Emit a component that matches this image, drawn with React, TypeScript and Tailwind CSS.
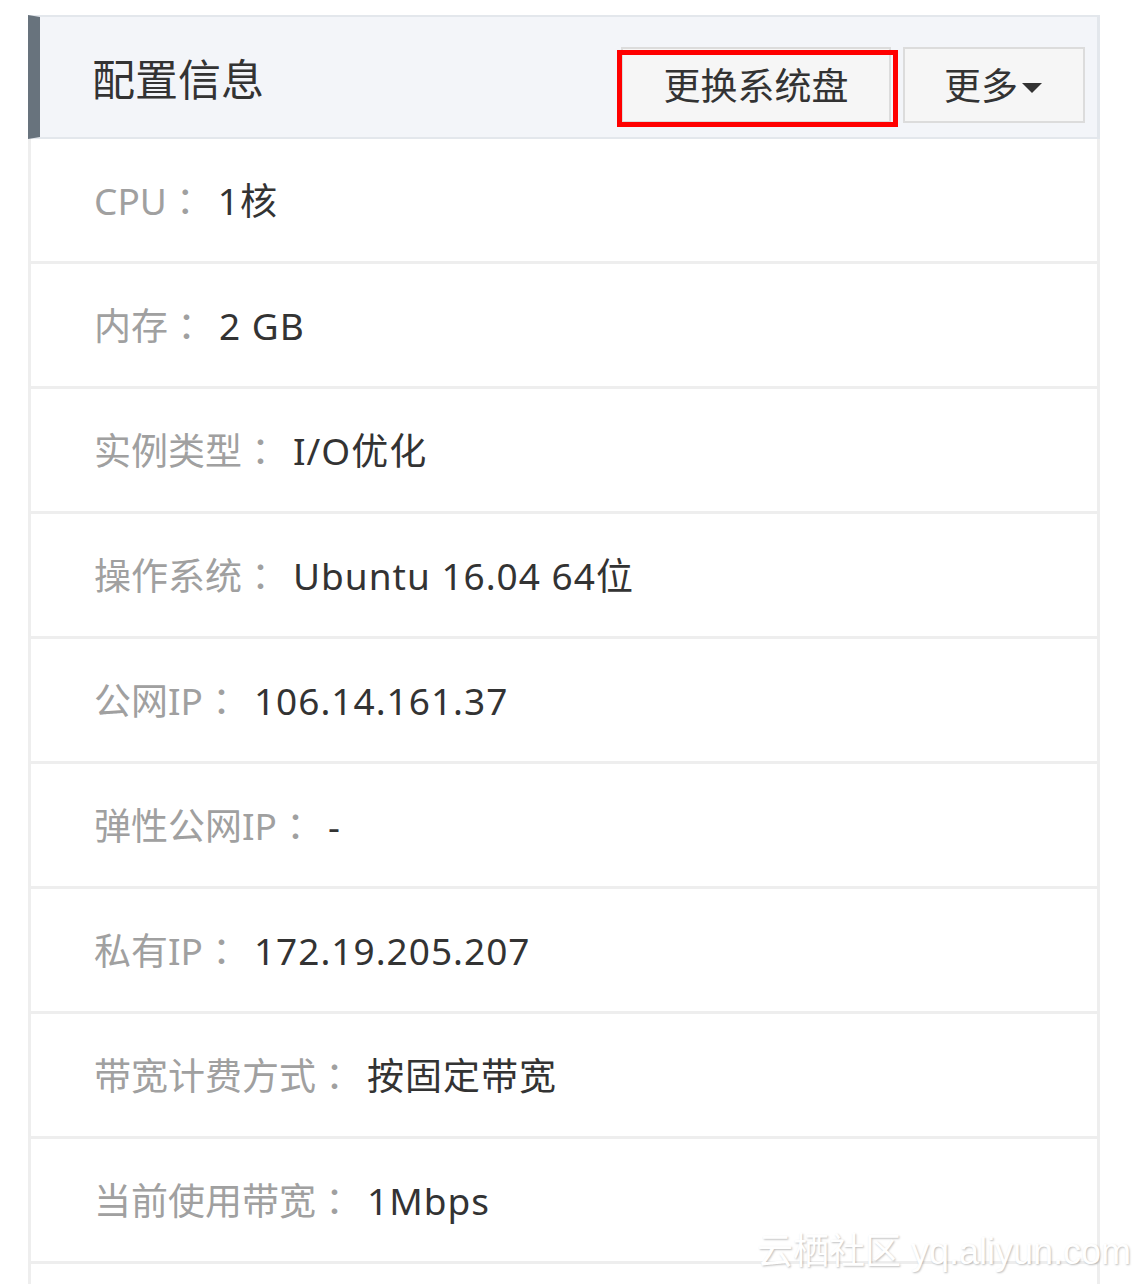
import React from "react";

const rows: [string, string][] = [
  ["CPU", "1核"],
  ["内存", "2 GB"],
  ["实例类型", "I/O优化"],
  ["操作系统", "Ubuntu 16.04 64位"],
  ["公网IP", "106.14.161.37"],
  ["弹性公网IP", "-"],
  ["私有IP", "172.19.205.207"],
  ["带宽计费方式", "按固定带宽"],
  ["当前使用带宽", "1Mbps"],
  ["", ""],
];

const font = { fontFamily: '"Noto Sans", "Noto Sans CJK SC", sans-serif' };
const colonFont = { fontFamily: '"Noto Sans CJK TC", sans-serif' };

export default function App() {
  return (
    <div className="relative w-[1141px] h-[1284px] overflow-hidden bg-white pt-[15px] pl-[28px]">
      <div className="w-[1072px]">
        {/* header */}
        <div className="flex items-center h-[124px] bg-[#f3f5f9] border-t-2 border-b-2 border-r-[3px] border-[#e3e7ec] border-l-[12px] border-l-[#68737d]">
          <div
            className="pl-[52px] text-[43px] text-[#333] leading-none"
            style={{ fontFamily: '"Noto Sans CJK SC", sans-serif' }}
          >
            配置信息
          </div>
          <div className="ml-auto mr-[12px] mt-[16px] flex gap-[12px]">
            <div className="relative">
              <div
                className="w-[270px] h-[76px] flex items-center justify-center bg-[#f6f6f6] border-2 border-[#dcdcdc] text-[37px] text-[#333]"
                style={{ fontFamily: '"Noto Sans CJK SC", sans-serif' }}
              >
                更换系统盘
              </div>
              <div className="absolute left-[-4px] top-[3px] w-[281px] h-[77px] border-[5px] border-[#ff0000]" />
            </div>
            <div
              className="w-[182px] h-[76px] flex items-center justify-center bg-[#f6f6f6] border-2 border-[#dcdcdc] text-[37px] text-[#333]"
              style={{ fontFamily: '"Noto Sans CJK SC", sans-serif' }}
            >
              <span>更多</span>
              <svg width="24" height="12" viewBox="0 0 24 12" className="ml-[2px] mt-[6px]">
                <path d="M2 1 L22 1 L12 11 Z" fill="#333" />
              </svg>
            </div>
          </div>
        </div>
        {/* rows */}
        {rows.map(([label, value], i) => (
          <div
            key={i}
            className="flex items-center h-[125px] border-l-[3px] border-r-[3px] border-b-[3px] border-[#eeeeee] pl-[63px] text-[37px] leading-none"
            style={font}
          >
            {label && (
              <>
                <span className="text-[#a0a0a0]">{label}</span>
                <span className="text-[#a0a0a0]" style={colonFont}>
                  ：
                </span>
                <span className="ml-[14px] text-[#333] tracking-[1px]">{value}</span>
              </>
            )}
          </div>
        ))}
      </div>
      <div
        className="absolute left-[757px] top-[1234px] text-[36px] leading-none text-white whitespace-nowrap"
        style={{
          fontFamily: '"Liberation Sans", "Noto Sans CJK SC", sans-serif',
          textShadow: "1px 1px 2px rgba(0,0,0,0.25)",
        }}
      >
        云栖社区 yq.aliyun.com
      </div>
    </div>
  );
}
